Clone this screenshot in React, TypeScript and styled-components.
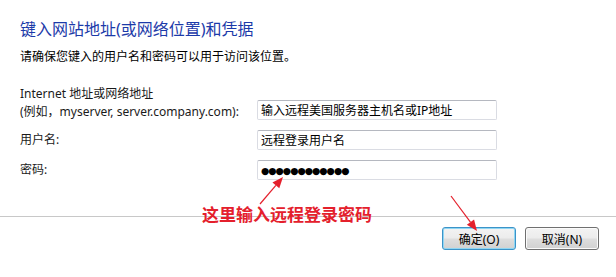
import React from "react";
import styled, { createGlobalStyle } from "styled-components";

const GlobalStyle = createGlobalStyle`
  html, body {
    margin: 0;
    padding: 0;
    background: #ffffff;
  }
  body {
    font-family: "Noto Sans", "Noto Sans CJK SC", sans-serif;
  }
`;

const Dialog = styled.div`
  position: relative;
  width: 616px;
  height: 277px;
  background: #ffffff;
  overflow: hidden;
`;

const Content = styled.div`
  padding: 18px 20px 0 20px;
  height: 216px;
  box-sizing: border-box;
`;

const Title = styled.h1`
  margin: 0;
  font-size: 16px;
  font-weight: 400;
  line-height: 22px;
  color: #1c3aa9;
`;

const Description = styled.p`
  margin: 9px 0 0 0;
  font-size: 12px;
  line-height: 16px;
  color: #000000;
`;

const FieldGrid = styled.div`
  display: grid;
  grid-template-columns: 237px 240px;
  row-gap: 10px;
  margin-top: 20px;
`;

const Label = styled.label<{ $multiline?: boolean }>`
  display: flex;
  flex-direction: column;
  justify-content: ${(p) => (p.$multiline ? "flex-end" : "center")};
  font-size: 12px;
  line-height: 18px;
  color: #1a1a1a;
  margin-bottom: ${(p) => (p.$multiline ? "-1px" : "0")};
`;

const Field = styled.input<{ $secret?: boolean }>`
  align-self: end;
  box-sizing: border-box;
  width: 240px;
  height: 20px;
  padding: 0 3px;
  border: 1px solid #dadce3;
  border-top-color: #b5b8c0;
  border-radius: 2px;
  background: #ffffff;
  outline: none;
  color: #000000;
  font-family: ${(p) =>
    p.$secret ? `"DejaVu Sans", sans-serif` : `"Noto Sans", "Noto Sans CJK SC", sans-serif`};
  font-size: ${(p) => (p.$secret ? "9.5px" : "12px")};
  letter-spacing: ${(p) => (p.$secret ? "-1px" : "0")};
`;

const Separator = styled.hr`
  margin: 0;
  border: none;
  border-top: 1px solid #c8c8c8;
`;

const Footer = styled.div`
  display: flex;
  justify-content: flex-end;
  gap: 9px;
  padding: 10px 17px 0 0;
`;

const Button = styled.button<{ $default?: boolean }>`
  width: 74px;
  height: 23px;
  padding: 0;
  font-family: "Noto Sans", "Noto Sans CJK SC", sans-serif;
  font-size: 12px;
  color: #000000;
  border-radius: 3px;
  border: 1px solid ${(p) => (p.$default ? "#3c93c8" : "#707070")};
  box-shadow: inset 0 0 0 1px
    ${(p) => (p.$default ? "#8fd6f3" : "#fbfbfb")};
  background: linear-gradient(
    to bottom,
    #f3f3f3 0%,
    #ececec 48%,
    #dedede 52%,
    #d1d1d1 100%
  );
  cursor: default;
`;

const Annotation = styled.div`
  position: absolute;
  left: 202px;
  top: 202px;
  font-family: "Noto Sans CJK SC", sans-serif;
  font-size: 17px;
  font-weight: 700;
  line-height: 24px;
  color: #e4202c;
  pointer-events: none;
`;

const ArrowLayer = styled.svg`
  position: absolute;
  left: 0;
  top: 0;
  pointer-events: none;
`;

type ArrowProps = { x1: number; y1: number; x2: number; y2: number };

const Arrow: React.FC<ArrowProps> = ({ x1, y1, x2, y2 }) => {
  const ang = Math.atan2(y2 - y1, x2 - x1);
  const len = 11;
  const half = 4.5;
  const bx = x2 - len * Math.cos(ang);
  const by = y2 - len * Math.sin(ang);
  const px = -Math.sin(ang) * half;
  const py = Math.cos(ang) * half;
  return (
    <g>
      <line x1={x1} y1={y1} x2={bx} y2={by} stroke="#e4202c" strokeWidth={1.2} />
      <polygon
        points={`${x2},${y2} ${bx + px},${by + py} ${bx - px},${by - py}`}
        fill="#e4202c"
      />
    </g>
  );
};

const App: React.FC = () => {
  return (
    <>
      <GlobalStyle />
      <Dialog>
        <Content>
          <Title>键入网站地址(或网络位置)和凭据</Title>
          <Description>请确保您键入的用户名和密码可以用于访问该位置。</Description>
          <FieldGrid>
            <Label $multiline htmlFor="addr">
              <span>Internet 地址或网络地址</span>
              <span>(例如，myserver, server.company.com):</span>
            </Label>
            <Field id="addr" readOnly value="输入远程美国服务器主机名或IP地址" />
            <Label htmlFor="user">用户名:</Label>
            <Field id="user" readOnly value="远程登录用户名" />
            <Label htmlFor="pass">密码:</Label>
            <Field id="pass" $secret readOnly value="●●●●●●●●●●●●" />
          </FieldGrid>
        </Content>
        <Separator />
        <Footer>
          <Button $default>确定(O)</Button>
          <Button>取消(N)</Button>
        </Footer>
        <Annotation>这里输入远程登录密码</Annotation>
        <ArrowLayer width={616} height={277} viewBox="0 0 616 277">
          <Arrow x1={260} y1={204} x2={283} y2={177} />
          <Arrow x1={451} y1={196} x2={477} y2={231} />
        </ArrowLayer>
      </Dialog>
    </>
  );
};

export default App;
